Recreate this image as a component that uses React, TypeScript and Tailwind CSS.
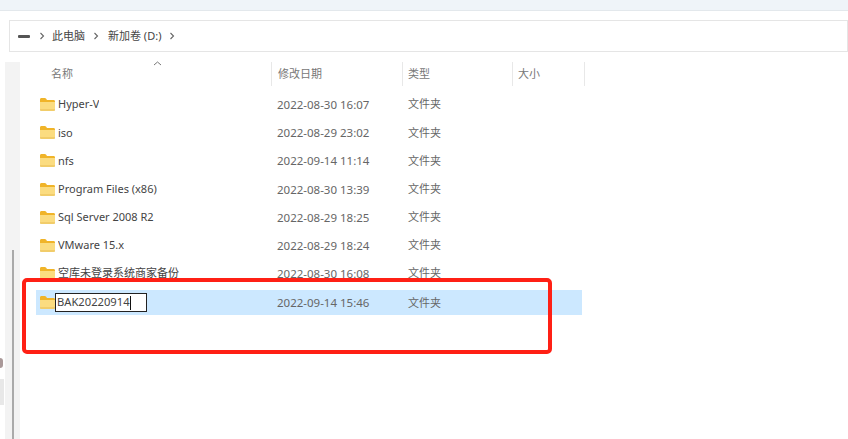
const rows = [
  ["Hyper-V", "2022-08-30 16:07"],
  ["iso", "2022-08-29 23:02"],
  ["nfs", "2022-09-14 11:14"],
  ["Program Files (x86)", "2022-08-30 13:39"],
  ["Sql Server 2008 R2", "2022-08-29 18:25"],
  ["VMware 15.x", "2022-08-29 18:24"],
  ["空库未登录系统商家备份", "2022-08-30 16:08"],
];

const font = { fontFamily: '"Noto Sans", "Noto Sans CJK SC", sans-serif' };

function Folder() {
  return (
    <svg width="15" height="13" viewBox="0 0 15 13" className="shrink-0">
      <path d="M0 1.5C0 .7.6 0 1.4 0h3.4c.5 0 .9.2 1.2.6L7 2h6.6c.8 0 1.4.6 1.4 1.4V6H0z" fill="#f0b429" />
      <path d="M0 4h15v7.6c0 .8-.6 1.4-1.4 1.4H1.4C.6 13 0 12.4 0 11.6z" fill="#fbdc80" />
      <path d="M0 12h15" stroke="#e8bd55" strokeWidth="1" />
    </svg>
  );
}

function Chevron() {
  return (
    <svg width="6" height="8" viewBox="0 0 6 8" className="shrink-0">
      <path d="M1.5 1 4.5 4 1.5 7" fill="none" stroke="#666" strokeWidth="1.1" />
    </svg>
  );
}

function Row({ name, date }: { name: string; date: string }) {
  return (
    <div className="flex h-[28.2px] items-center text-[11px] text-[#666]">
      <div className="flex w-[237px] items-center gap-[3px] pl-[4px]">
        <Folder />
        <span className="truncate text-[#444]">{name}</span>
      </div>
      <div className="w-[135px] pl-[4px] text-[11.5px]">{date}</div>
      <div>文件夹</div>
    </div>
  );
}

export default function App() {
  return (
    <div className="relative h-[439px] w-[848px] overflow-hidden bg-white" style={font}>
      <div className="h-[11px] border-b border-[#e3e8ec] bg-[#eff4f9]" />
      <div className="ml-[9px] mt-[9px] flex h-[32px] items-center border border-[#e5e5e5] pl-[8px] text-[11px] text-[#444]">
        <div className="h-[3px] w-[12px] rounded-[1px] bg-[#555]" />
        <div className="ml-[9px] mr-[7px]"><Chevron /></div>
        <span>此电脑</span>
        <div className="ml-[8px] mr-[9px]"><Chevron /></div>
        <span>新加卷 (D:)</span>
        <div className="ml-[8px]"><Chevron /></div>
      </div>
      <div className="mt-[10px] flex">
        <div className="flex h-[377px] w-[20px] shrink-0">
          <div className="flex w-[5px] flex-col pt-[296px]">
            <div className="h-[10px] w-[3px] rounded-r-full bg-[#a99]" />
            <div className="mt-[11px] h-[26px] w-[4px] bg-[#e8e8e8]" />
          </div>
          <div className="relative w-[15px] bg-[#f3f3f3]">
            <div className="absolute bottom-0 left-[7px] h-[189px] w-[1.5px] bg-[#aaa]" />
          </div>
        </div>
        <div className="w-[566px] pl-[16px]">
          <div className="relative flex h-[24px] items-center text-[11px] text-[#777]">
            <div className="w-[235px] pb-[0px] pl-[15px] pt-[1px]">名称</div>
            <div className="flex h-full w-[131px] items-center border-l border-[#e8e8e8] pl-[6px] pt-[1px]">修改日期</div>
            <div className="flex h-full w-[110px] items-center border-l border-[#e8e8e8] pl-[5px] pt-[1px]">类型</div>
            <div className="flex h-full w-[73px] items-center border-l border-r border-[#e8e8e8] pl-[5px] pt-[1px]">大小</div>
            <svg width="9" height="5" viewBox="0 0 9 5" className="absolute left-[117px] top-[-1px]">
              <path d="M1 4 4.5 1 8 4" fill="none" stroke="#777" strokeWidth="1" />
            </svg>
          </div>
          <div className="pt-[4.5px]">
            {rows.map((r) => (
              <Row key={r[0]} name={r[0]} date={r[1]} />
            ))}
          </div>
          <div className="mt-[2.5px] flex h-[25px] w-[546px] items-center bg-[#cce8ff] text-[11px] text-[#666]">
            <div className="flex w-[237px] items-center pl-[4px]">
              <Folder />
              <div className="flex h-[19px] w-[92px] items-center border border-[#222] bg-white pl-[1px] text-[11.2px] text-[#444]">
                <span>BAK20220914</span>
                <span className="h-[14px] w-px bg-[#111]" />
              </div>
            </div>
            <div className="w-[135px] pl-[4px] text-[11.5px]">2022-09-14 15:46</div>
            <div>文件夹</div>
          </div>
        </div>
      </div>
      <div className="absolute left-[22px] top-[278px] h-[76px] w-[530px] rounded-[5px] border-[4px] border-[#ff2015]" />
    </div>
  );
}
